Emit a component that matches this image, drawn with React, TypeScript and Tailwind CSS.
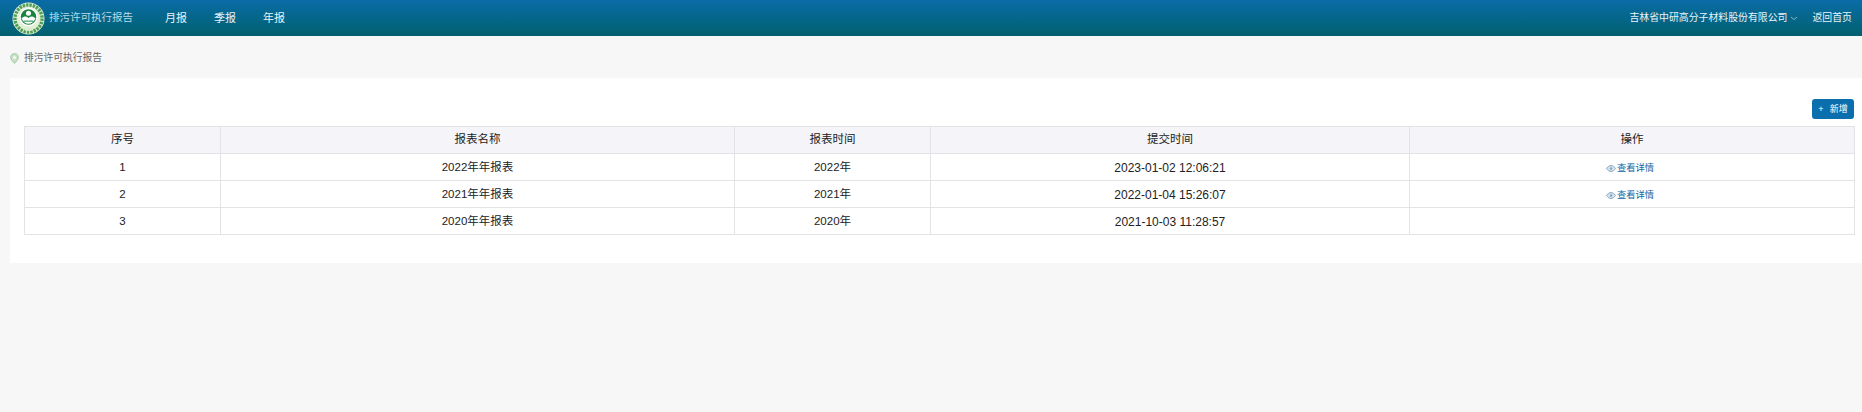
import React from "react";

const FONT = "font-['Liberation_Sans','Noto_Sans_CJK_SC',sans-serif]";

const Logo = () => (
  <svg width="33" height="33" viewBox="0 0 34 34" className="shrink-0">
    <circle cx="17" cy="17" r="16.500" fill="#e3f0d8" />
    <circle cx="17" cy="17" r="14" fill="none" stroke="#4f9e57" strokeWidth="3.500" strokeDasharray="2.500 1" />
    <circle cx="17" cy="15.500" r="9.500" fill="#fff" />
    <circle cx="17" cy="15.500" r="8" fill="#17853f" />
    <circle cx="17" cy="11.500" r="2.600" fill="#fff" />
    <path d="M9.800 17c2.700-2.400 4.500-2.600 7.200-.6 2.700-2 4.500-1.800 7.200.6-1.800 3.600-4.200 5.500-7.200 5.500S11.600 20.600 9.800 17Z" fill="#fff" />
    <path d="M12 19.700h10" stroke="#17853f" strokeWidth="1" />
    <rect x="13" y="26.500" width="8" height="3" rx="1" fill="#dcebd0" />
  </svg>
);

const Pin = () => (
  <svg width="9" height="11" viewBox="0 0 9 11" className="shrink-0">
    <path d="M4.500.6C2.200.6.600 2.200.600 4.400.600 6.900 4.500 10.400 4.500 10.400S8.400 6.900 8.400 4.400C8.400 2.200 6.800.6 4.500.6Z" fill="#c6e0c4" stroke="#a9cbad" />
    <circle cx="4.500" cy="4.500" r="1.500" fill="#f7f7f8" />
  </svg>
);

const Eye = () => (
  <svg width="10" height="7" viewBox="0 0 10 7" className="shrink-0">
    <path d="M.5 3.500C1.800 1.600 3.300.6 5 .6s3.200 1 4.500 2.900C8.200 5.400 6.700 6.400 5 6.400S1.800 5.400.5 3.500Z" fill="#d5e3ee" stroke="#83a6bf" />
    <circle cx="5" cy="3.500" r="1.200" fill="#83a6bf" />
  </svg>
);

const rows = [
  ["1", "2022年年报表", "2022年", "2023-01-02 12:06:21", true],
  ["2", "2021年年报表", "2021年", "2022-01-04 15:26:07", true],
  ["3", "2020年年报表", "2020年", "2021-10-03 11:28:57", false],
] as const;

const th = "border border-[#e3e3e6] h-[27px] p-0 font-normal text-center";
const td = "border border-[#e3e3e6] h-[27px] p-0 pt-[2px] text-center";

export default function App() {
  return (
    <div className={`${FONT} h-[412px] w-[1862px] overflow-hidden bg-[#f7f7f8] text-[11.5px] text-[#222]`}>
      <header className="flex h-[36px] items-center justify-between bg-gradient-to-b from-[#0a6ca6] to-[#04606f] pl-[12px] pr-[10px] text-[#e8f4f8]">
        <div className="flex items-center">
          <Logo />
          <span className="ml-[4px] text-[10.5px] text-[#b9dbe6]">排污许可执行报告</span>
          <nav className="ml-[32px] flex gap-[27px] text-[11px]">
            <span>月报</span>
            <span>季报</span>
            <span>年报</span>
          </nav>
        </div>
        <div className="flex items-center text-[9.9px]">
          <span>吉林省中研高分子材料股份有限公司</span>
          <svg width="8" height="5" viewBox="0 0 8 5" className="ml-[3px] mt-[2px]">
            <path d="M1 1l3 2.500L7 1" fill="none" stroke="#7fb4c8" />
          </svg>
          <span className="ml-[14px]">返回首页</span>
        </div>
      </header>

      <div className="flex h-[42px] items-center gap-[5px] pl-[10px] pt-[2px] text-[9.75px] text-[#666]">
        <Pin />
        <span>排污许可执行报告</span>
      </div>

      <main className="ml-[10px] flex h-[185px] flex-col bg-white pl-[14px] pr-[8px] pt-[21px]">
        <div className="flex justify-end">
          <button className="flex h-[20px] w-[42px] items-center justify-center gap-[6px] rounded-[3px] bg-[#0b6fae] pt-[1px] text-[9px] text-white">
            <span>+</span>
            <span>新增</span>
          </button>
        </div>
        <table className="mt-[7px] w-[1830px] table-fixed border-collapse">
          <colgroup>
            <col className="w-[196px]" />
            <col className="w-[514px]" />
            <col className="w-[196px]" />
            <col className="w-[479px]" />
            <col className="w-[445px]" />
          </colgroup>
          <thead>
            <tr className="bg-[#f5f5f9]">
              <th className={th}>序号</th>
              <th className={th}>报表名称</th>
              <th className={th}>报表时间</th>
              <th className={th}>提交时间</th>
              <th className={th}>操作</th>
            </tr>
          </thead>
          <tbody>
            {rows.map((r) => (
              <tr key={r[0]}>
                <td className={td}>{r[0]}</td>
                <td className={td}>{r[1]}</td>
                <td className={td}>{r[2]}</td>
                <td className={`${td} text-[12px]`}>{r[3]}</td>
                <td className={td}>
                  {r[4] && (
                    <span className="mr-[4px] inline-flex items-center gap-[1px] align-middle text-[9.25px] leading-none text-[#0b66a5]">
                      <Eye />
                      查看详情
                    </span>
                  )}
                </td>
              </tr>
            ))}
          </tbody>
        </table>
      </main>
    </div>
  );
}
